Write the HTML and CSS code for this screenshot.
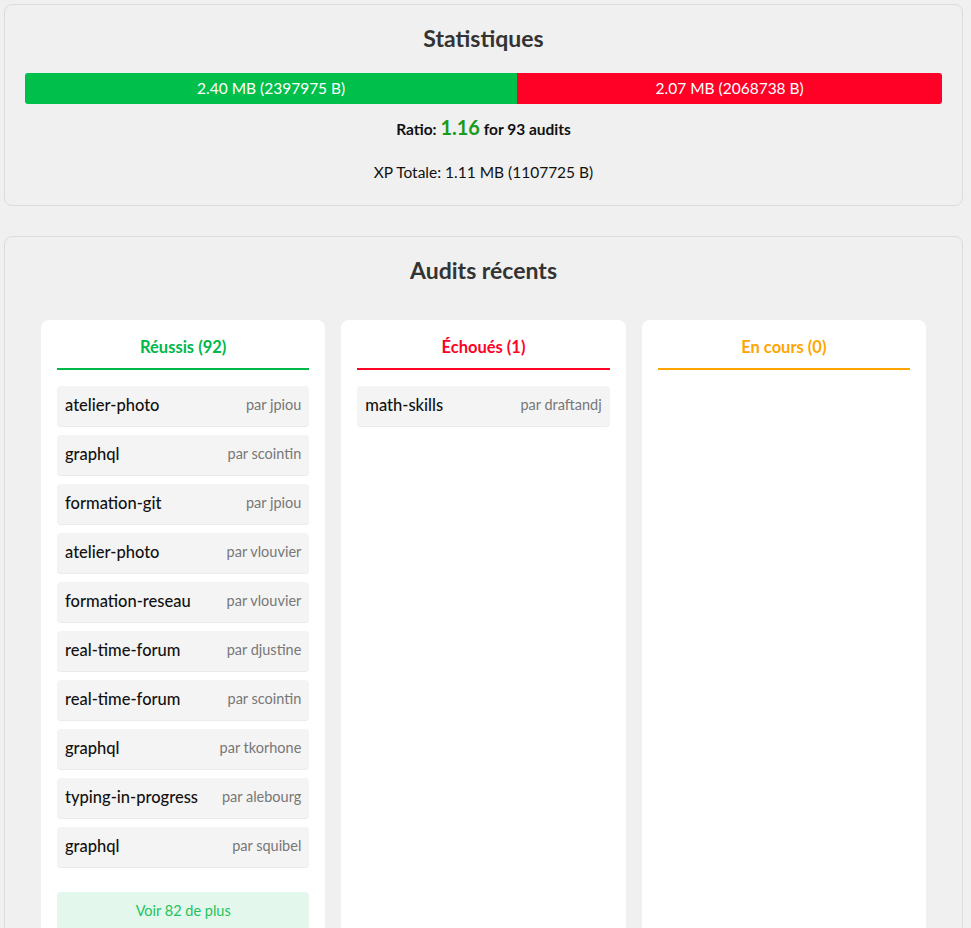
FILE: index.html
```html
<!DOCTYPE html>
<html lang="fr">
<head>
<meta charset="utf-8">
<title>Statistiques</title>
<link rel="stylesheet" href="styles.css">
</head>
<body>
<main class="page">
  <section class="card stats">
    <h2 class="card-title">Statistiques</h2>
    <div class="bar">
      <div class="bar-up" style="width: 53.69%">2.40 MB (2397975 B)</div>
      <div class="bar-down">2.07 MB (2068738 B)</div>
    </div>
    <p class="ratio">Ratio: <span class="ratio-num">1.16</span> for 93 audits</p>
    <p class="xp">XP Totale: 1.11 MB (1107725 B)</p>
  </section>

  <section class="card audits">
    <h2 class="card-title">Audits récents</h2>
    <div class="columns">
      <div class="col">
        <h3 class="col-head success">Réussis (92)</h3>
        <ul class="list">
          <li class="item"><span class="name">atelier-photo</span><span class="by">par jpiou</span></li>
          <li class="item"><span class="name">graphql</span><span class="by">par scointin</span></li>
          <li class="item"><span class="name">formation-git</span><span class="by">par jpiou</span></li>
          <li class="item"><span class="name">atelier-photo</span><span class="by">par vlouvier</span></li>
          <li class="item"><span class="name">formation-reseau</span><span class="by">par vlouvier</span></li>
          <li class="item"><span class="name">real-time-forum</span><span class="by">par djustine</span></li>
          <li class="item"><span class="name">real-time-forum</span><span class="by">par scointin</span></li>
          <li class="item"><span class="name">graphql</span><span class="by">par tkorhone</span></li>
          <li class="item"><span class="name">typing-in-progress</span><span class="by">par alebourg</span></li>
          <li class="item"><span class="name">graphql</span><span class="by">par squibel</span></li>
        </ul>
        <button class="more">Voir 82 de plus</button>
      </div>
      <div class="col">
        <h3 class="col-head failed">Échoués (1)</h3>
        <ul class="list">
          <li class="item"><span class="name">math-skills</span><span class="by">par draftandj</span></li>
        </ul>
      </div>
      <div class="col">
        <h3 class="col-head pending">En cours (0)</h3>
        <ul class="list"></ul>
      </div>
    </div>
  </section>
</main>
</body>
</html>
```

FILE: styles.css
```css
* { box-sizing: border-box; }
html, body { margin: 0; padding: 0; }
body {
  background: #f0f0f0;
  font-family: "Lato", "Open Sans", sans-serif;
  color: #111;
}
.page {
  width: 963px;
  padding: 4px 0 0 4px;
}
.card {
  background: #f0f0f0;
  border: 1px solid #dcdcdc;
  border-radius: 8px;
  padding: 20px 20px 0;
}
.stats { height: 202px; margin-bottom: 30px; }
.card-title {
  margin: 0;
  height: 30px;
  line-height: 27px;
  padding-bottom: 3px;
  font-size: 23px;
  font-weight: 700;
  text-align: center;
  color: #333;
}
.stats .card-title { margin-bottom: 18px; }
.bar {
  display: flex;
  height: 31px;
  border-radius: 3px;
  overflow: hidden;
  color: #fff;
  font-size: 15.5px;
  line-height: 30px;
  text-align: center;
}
.bar-up { background: #00bf4b; }
.bar-down { background: #ff0027; flex: 1; }
.ratio {
  margin: 11px 0 0;
  font-size: 15.5px;
  font-weight: 700;
  text-align: center;
  line-height: 24px;
}
.ratio-num { color: #1a9a1a; font-size: 20px; }
.xp {
  margin: 21px 0 0;
  font-size: 15.5px;
  text-align: center;
  line-height: 20px;
}
.audits { padding-bottom: 20px; }
.audits .card-title { margin-bottom: 17px; }
.columns {
  display: grid;
  grid-template-columns: repeat(3, 1fr);
  gap: 16px;
  padding: 16px 16px 0;
}
.col {
  background: #fff;
  border-radius: 8px;
  padding: 16px 16px 20px;
  min-height: 640px;
}
.col-head {
  margin: 0 0 16px;
  padding: 1px 0 11px;
  font-size: 16.5px;
  line-height: 20px;
  font-weight: 700;
  text-align: center;
  border-bottom: 2px solid;
}
.success { color: #00b84a; border-color: #00b84a; }
.failed { color: #ff0027; border-color: #ff0027; }
.pending { color: #ffa500; border-color: #ffa500; }
.list { list-style: none; margin: 0; padding: 0; }
.item {
  display: flex;
  justify-content: space-between;
  align-items: center;
  height: 40px;
  padding: 0 8px 3px;
  margin-bottom: 9px;
  background: #f4f4f4;
  border-radius: 4px;
  box-shadow: 0 1px 0 #ebebeb;
}
.name { font-size: 16.5px; font-weight: 500; color: #111; }
.by { font-size: 14.5px; color: #777; }
.more {
  display: block;
  width: 100%;
  margin-top: 25px;
  height: 38px;
  padding: 0 0 2px;
  border: 0;
  border-radius: 4px;
  background: #e3f7ec;
  color: #1fc25c;
  font-family: inherit;
  font-size: 14.5px;
}
```
